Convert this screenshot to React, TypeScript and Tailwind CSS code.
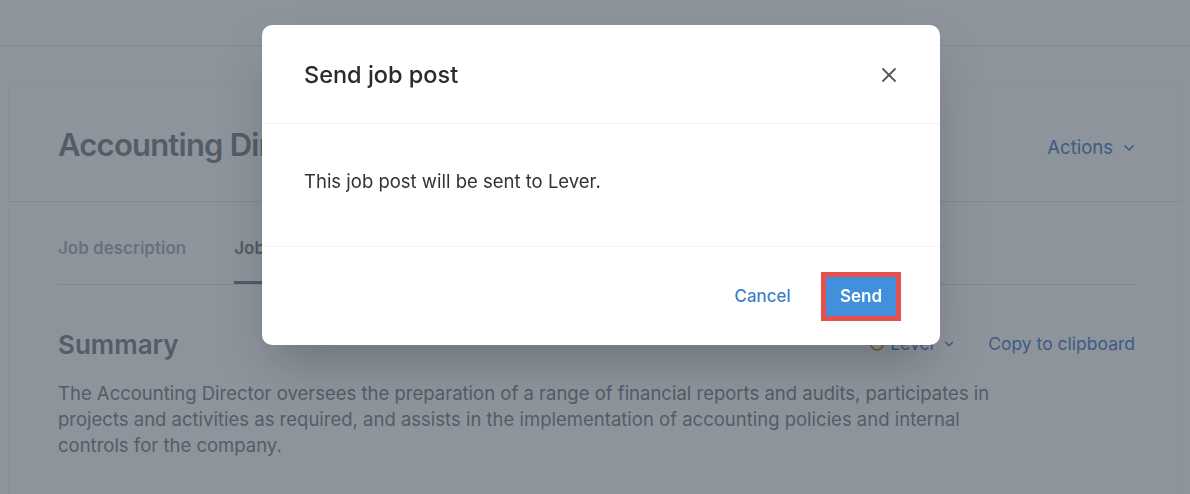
import React from 'react';
import { X, ChevronDown } from 'lucide-react';

const JobPage: React.FC = () => {
  return (
    <div className="min-h-[494px] bg-white">
      {/* Top bar */}
      <div className="h-[46px] border-b border-gray-200 bg-white" />

      <div className="mx-2 mt-[37px] min-h-[420px] rounded-t-lg border border-b-0 border-gray-100 bg-white">
        {/* Title row */}
        <div className="flex h-[118px] items-center justify-between border-b border-gray-200 pl-[49px] pr-[44px] pt-[6px]">
          <h1 className="text-[31px] font-semibold tracking-tight text-[#8e8e94]">Accounting Director</h1>
          <button className="flex items-center gap-2 pt-[4px] text-[18.5px] text-[#5b8fc7]">
            Actions
            <ChevronDown className="h-4 w-4" strokeWidth={2.5} />
          </button>
        </div>

        <div className="pl-[49px] pr-[46px]">
          {/* Tabs */}
          <div className="flex gap-12 border-b border-gray-200 pt-[34px]">
            <div className="pb-[22px] text-[17px] font-semibold text-[#b6b7bd]">Job description</div>
            <div className="border-b-[3px] border-[#8a8b92] pb-[19px] text-[17px] font-semibold text-[#8a8b92]">Job post</div>
          </div>

          {/* Summary */}
          <div className="mt-[40px] flex items-center justify-between">
            <h2 className="text-[26px] font-semibold text-[#8e8e94]">Summary</h2>
            <div className="flex items-center gap-8 text-[17.5px]">
              <span className="flex items-center gap-1.5 text-[#5b8fc7]">
                <span className="h-[14px] w-[14px] rounded-full border-2 border-[#d7a541]" />
                Lever
                <ChevronDown className="h-3.5 w-3.5" strokeWidth={2.5} />
              </span>
              <span className="text-[#5b8fc7]">Copy to clipboard</span>
            </div>
          </div>

          <p className="mt-[16px] max-w-[960px] text-[18.5px] leading-[26px] text-[#8e8e94]">
            The Accounting Director oversees the preparation of a range of financial reports and audits, participates in
            projects and activities as required, and assists in the implementation of accounting policies and internal
            controls for the company.
          </p>
        </div>
      </div>
    </div>
  );
};

const SendDialog: React.FC = () => {
  return (
    <div className="fixed inset-0 flex items-start justify-center bg-gray-800/50">
      <div className="ml-[12px] mt-[25px] w-[678px] rounded-[10px] bg-white shadow-2xl">
        <div className="flex h-[99px] items-center justify-between border-b border-gray-100 pl-[42px] pr-[39px] pt-[1px]">
          <h3 className="text-[23.5px] font-medium text-[#2b2b2b]">Send job post</h3>
          <button className="text-[#555]">
            <X className="h-[24px] w-[24px]" strokeWidth={1.8} />
          </button>
        </div>
        <div className="flex h-[123px] items-center border-b border-gray-100 pl-[42px] pb-[7px]">
          <p className="text-[18.5px] text-[#333]">This job post will be sent to Lever.</p>
        </div>
        <div className="flex h-[98px] items-center justify-end gap-[30px] pr-[39px] pt-[1px]">
          <button className="text-[17px] font-medium text-[#3a82c8]">Cancel</button>
          <button className="border-[5px] border-[#e5504c] bg-[#4290dc] px-[14px] py-[11px] text-[17px] font-semibold leading-[17px] text-white">
            Send
          </button>
        </div>
      </div>
    </div>
  );
};

const App: React.FC = () => {
  return (
    <div style={{ fontFamily: 'Inter, "Noto Sans", sans-serif' }} className="relative h-[494px] overflow-hidden">
      <JobPage />
      <SendDialog />
    </div>
  );
};

export default App;
